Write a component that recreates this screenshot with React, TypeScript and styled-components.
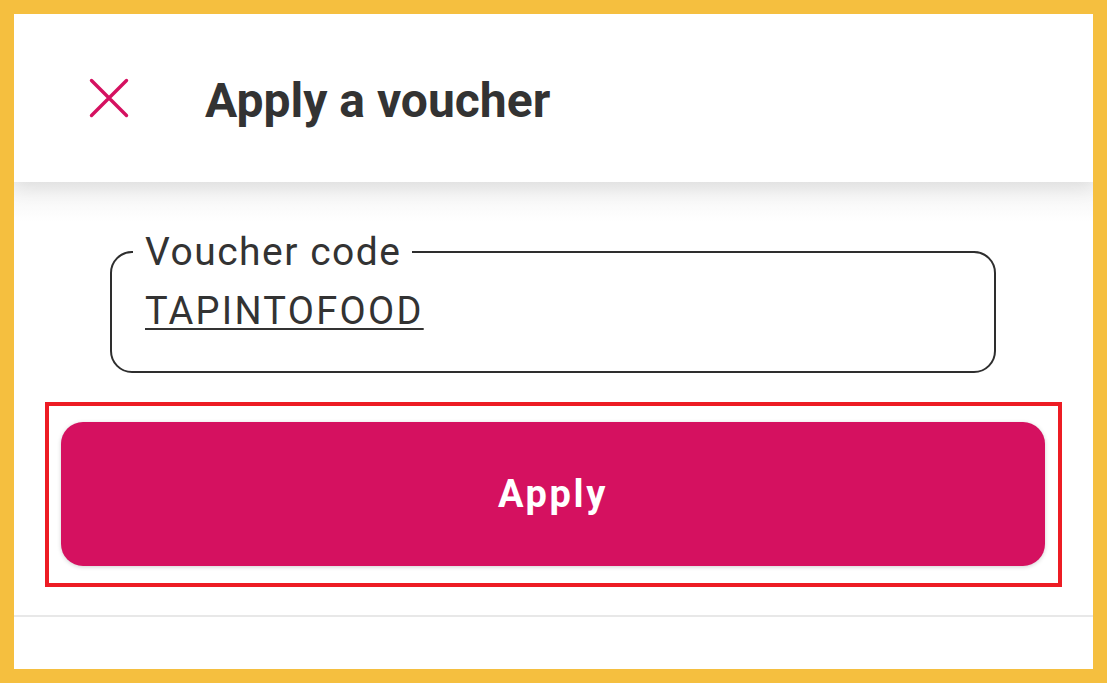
import React from "react";
import styled, { createGlobalStyle } from "styled-components";

const Global = createGlobalStyle`
  html, body { margin: 0; padding: 0; }
  body { background: #f5bf3f; font-family: Roboto, "Noto Sans", Arial, sans-serif; }
  * { box-sizing: border-box; }
`;

const Frame = styled.div`
  width: 1107px;
  height: 683px;
  padding: 14px;
  background: #f5bf3f;
`;

const Sheet = styled.div`
  width: 100%;
  height: 100%;
  background: #ffffff;
  display: flex;
  flex-direction: column;
  overflow: hidden;
`;

const Header = styled.header`
  height: 168px;
  flex: none;
  display: flex;
  align-items: center;
  padding: 5px 0 0 75px;
  background: #ffffff;
  box-shadow: 0 6px 18px rgba(0, 0, 0, 0.09);
  position: relative;
  z-index: 1;
`;

const CloseButton = styled.button`
  width: 40px;
  height: 40px;
  padding: 0;
  margin: 0 0 5px 0;
  border: 0;
  background: transparent;
  display: flex;
  align-items: center;
  justify-content: center;
  cursor: pointer;
`;

const Title = styled.h1`
  margin: 0 0 0 76px;
  font-size: 48px;
  font-weight: 700;
  color: #333333;
  line-height: 48px;
`;

const Body = styled.main`
  flex: 1;
  display: flex;
  flex-direction: column;
  background: linear-gradient(#f3f3f3 0px, #ffffff 40px);
`;

const Field = styled.fieldset`
  margin: 47px 97px 0 96px;
  padding: 13px 20px 37px 21px;
  border: 2.5px solid #2e2e2e;
  border-radius: 22px;
  min-width: 0;
`;

const Legend = styled.legend`
  padding: 0 10px 0 12px;
  font-size: 39px;
  line-height: 46px;
  letter-spacing: 1.5px;
  color: #333333;
  font-weight: 400;
`;

const Value = styled.div`
  padding-left: 12px;
  font-size: 38px;
  line-height: 46px;
  letter-spacing: 2.3px;
  color: #333333;
  text-decoration: underline;
  text-decoration-thickness: 2px;
  text-underline-offset: 4px;
`;

const Highlight = styled.div`
  margin: 29px 31px 0 31px;
  border: 4px solid #ed1c24;
  padding: 16px 13px 17px 12px;
`;

const ApplyButton = styled.button`
  width: 100%;
  height: 144px;
  border: 0;
  border-radius: 22px;
  background: #d51160;
  color: #ffffff;
  font-family: Roboto, "Noto Sans", Arial, sans-serif;
  font-size: 38px;
  font-weight: 700;
  letter-spacing: 2.6px;
  box-shadow: 0 1px 4px rgba(0, 0, 0, 0.18);
  cursor: pointer;
`;

const Divider = styled.hr`
  margin: 28px 0 0 0;
  border: 0;
  height: 2px;
  background: #e8e8e8;
`;

export default function App() {
  return (
    <>
      <Global />
      <Frame>
        <Sheet>
          <Header>
            <CloseButton aria-label="Close">
              <svg width="40" height="40" viewBox="0 0 40 40">
                <path
                  d="M2.5 2.5 L37.5 37.5 M37.5 2.5 L2.5 37.5"
                  stroke="#d51160"
                  strokeWidth="3.4"
                  strokeLinecap="round"
                  fill="none"
                />
              </svg>
            </CloseButton>
            <Title>Apply a voucher</Title>
          </Header>
          <Body>
            <Field>
              <Legend>Voucher code</Legend>
              <Value>TAPINTOFOOD</Value>
            </Field>
            <Highlight>
              <ApplyButton>Apply</ApplyButton>
            </Highlight>
            <Divider />
          </Body>
        </Sheet>
      </Frame>
    </>
  );
}
